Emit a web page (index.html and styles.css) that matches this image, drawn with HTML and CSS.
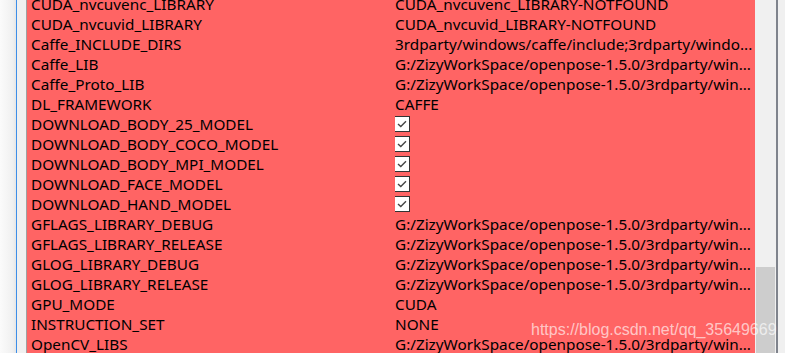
FILE: index.html
```html
<!DOCTYPE html>
<html>
<head>
<meta charset="utf-8">
<link rel="stylesheet" href="styles.css">
</head>
<body>
<div class="window">
  <div class="gutter">
    <div class="fade"></div>
    <div class="focus-line"></div>
    <div class="gap"></div>
    <div class="edge"></div>
  </div>
  <div class="table">
    <div class="rows">
      <div class="row"><span class="name">CUDA_nvcuvenc_LIBRARY</span><span class="value">CUDA_nvcuvenc_LIBRARY-NOTFOUND</span></div>
      <div class="row"><span class="name">CUDA_nvcuvid_LIBRARY</span><span class="value">CUDA_nvcuvid_LIBRARY-NOTFOUND</span></div>
      <div class="row"><span class="name">Caffe_INCLUDE_DIRS</span><span class="value">3rdparty/windows/caffe/include;3rdparty/windo...</span></div>
      <div class="row"><span class="name">Caffe_LIB</span><span class="value">G:/ZizyWorkSpace/openpose-1.5.0/3rdparty/win...</span></div>
      <div class="row"><span class="name">Caffe_Proto_LIB</span><span class="value">G:/ZizyWorkSpace/openpose-1.5.0/3rdparty/win...</span></div>
      <div class="row"><span class="name">DL_FRAMEWORK</span><span class="value">CAFFE</span></div>
      <div class="row"><span class="name">DOWNLOAD_BODY_25_MODEL</span><span class="value"><span class="check"><svg viewBox="0 0 14 14" width="14" height="14"><path d="M3 7 L5.8 9.6 L11 4.3" fill="none" stroke="#444" stroke-width="1.4"/></svg></span></span></div>
      <div class="row"><span class="name">DOWNLOAD_BODY_COCO_MODEL</span><span class="value"><span class="check"><svg viewBox="0 0 14 14" width="14" height="14"><path d="M3 7 L5.8 9.6 L11 4.3" fill="none" stroke="#444" stroke-width="1.4"/></svg></span></span></div>
      <div class="row"><span class="name">DOWNLOAD_BODY_MPI_MODEL</span><span class="value"><span class="check"><svg viewBox="0 0 14 14" width="14" height="14"><path d="M3 7 L5.8 9.6 L11 4.3" fill="none" stroke="#444" stroke-width="1.4"/></svg></span></span></div>
      <div class="row"><span class="name">DOWNLOAD_FACE_MODEL</span><span class="value"><span class="check"><svg viewBox="0 0 14 14" width="14" height="14"><path d="M3 7 L5.8 9.6 L11 4.3" fill="none" stroke="#444" stroke-width="1.4"/></svg></span></span></div>
      <div class="row"><span class="name">DOWNLOAD_HAND_MODEL</span><span class="value"><span class="check"><svg viewBox="0 0 14 14" width="14" height="14"><path d="M3 7 L5.8 9.6 L11 4.3" fill="none" stroke="#444" stroke-width="1.4"/></svg></span></span></div>
      <div class="row"><span class="name">GFLAGS_LIBRARY_DEBUG</span><span class="value">G:/ZizyWorkSpace/openpose-1.5.0/3rdparty/win...</span></div>
      <div class="row"><span class="name">GFLAGS_LIBRARY_RELEASE</span><span class="value">G:/ZizyWorkSpace/openpose-1.5.0/3rdparty/win...</span></div>
      <div class="row"><span class="name">GLOG_LIBRARY_DEBUG</span><span class="value">G:/ZizyWorkSpace/openpose-1.5.0/3rdparty/win...</span></div>
      <div class="row"><span class="name">GLOG_LIBRARY_RELEASE</span><span class="value">G:/ZizyWorkSpace/openpose-1.5.0/3rdparty/win...</span></div>
      <div class="row"><span class="name">GPU_MODE</span><span class="value">CUDA</span></div>
      <div class="row"><span class="name">INSTRUCTION_SET</span><span class="value">NONE</span></div>
      <div class="row"><span class="name">OpenCV_LIBS</span><span class="value">G:/ZizyWorkSpace/openpose-1.5.0/3rdparty/win...</span></div>
    </div>
  </div>
  <div class="scrollbar">
    <div class="track"><div class="thumb"></div></div>
    <div class="frame"></div>
    <div class="outside"></div>
  </div>
  <div class="watermark">https://blog.csdn.net/qq_35649669</div>
</div>
</body>
</html>
```
FILE: styles.css
```css
html, body {
  margin: 0;
  padding: 0;
  background: #f0f0f0;
}
.window {
  position: relative;
  display: flex;
  width: 785px;
  height: 353px;
  overflow: hidden;
  font-family: "Noto Sans", "Open Sans", sans-serif;
  font-size: 15.3px;
  color: #000;
}
.gutter {
  display: flex;
  width: 27px;
  flex: none;
}
.fade {
  width: 16px;
  background: linear-gradient(to right, #fbfbfb, #f0f0f0 80%, #e6e6e6);
}
.focus-line {
  width: 1px;
  background: #3d8ee8;
}
.gap {
  width: 9px;
  background: #f0f0f0;
}
.edge {
  width: 1px;
  background: #a0a0a0;
}
.table {
  width: 728px;
  flex: none;
  background: #ff6464;
  overflow: hidden;
}
.rows {
  margin-top: -6px;
}
.row {
  display: flex;
  height: 20px;
  align-items: center;
  white-space: nowrap;
}
.name {
  width: 364px;
  padding-left: 4px;
  flex: none;
}
.value {
  flex: 1;
  overflow: hidden;
  display: flex;
  align-items: center;
}
.check {
  display: flex;
  align-items: center;
  justify-content: center;
  width: 14px;
  height: 14px;
  margin-left: -1px;
  border: 1px solid #333;
  background: #fff;
}
.scrollbar {
  display: flex;
  width: 30px;
  flex: none;
}
.track {
  width: 21px;
  background: #f0f0f0;
  display: flex;
  flex-direction: column;
  justify-content: flex-end;
}
.thumb {
  margin-left: 1px;
  width: 19px;
  height: 86px;
  background: #cdcdcd;
}
.frame {
  width: 2px;
  background: #7f838c;
}
.outside {
  flex: 1;
  background: #f0f0f0;
}
.watermark {
  position: absolute;
  left: 531px;
  top: 321px;
  font-family: "Liberation Sans", Arial, sans-serif;
  font-size: 16px;
  color: rgba(255, 255, 255, 0.65);
  white-space: nowrap;
}
```
